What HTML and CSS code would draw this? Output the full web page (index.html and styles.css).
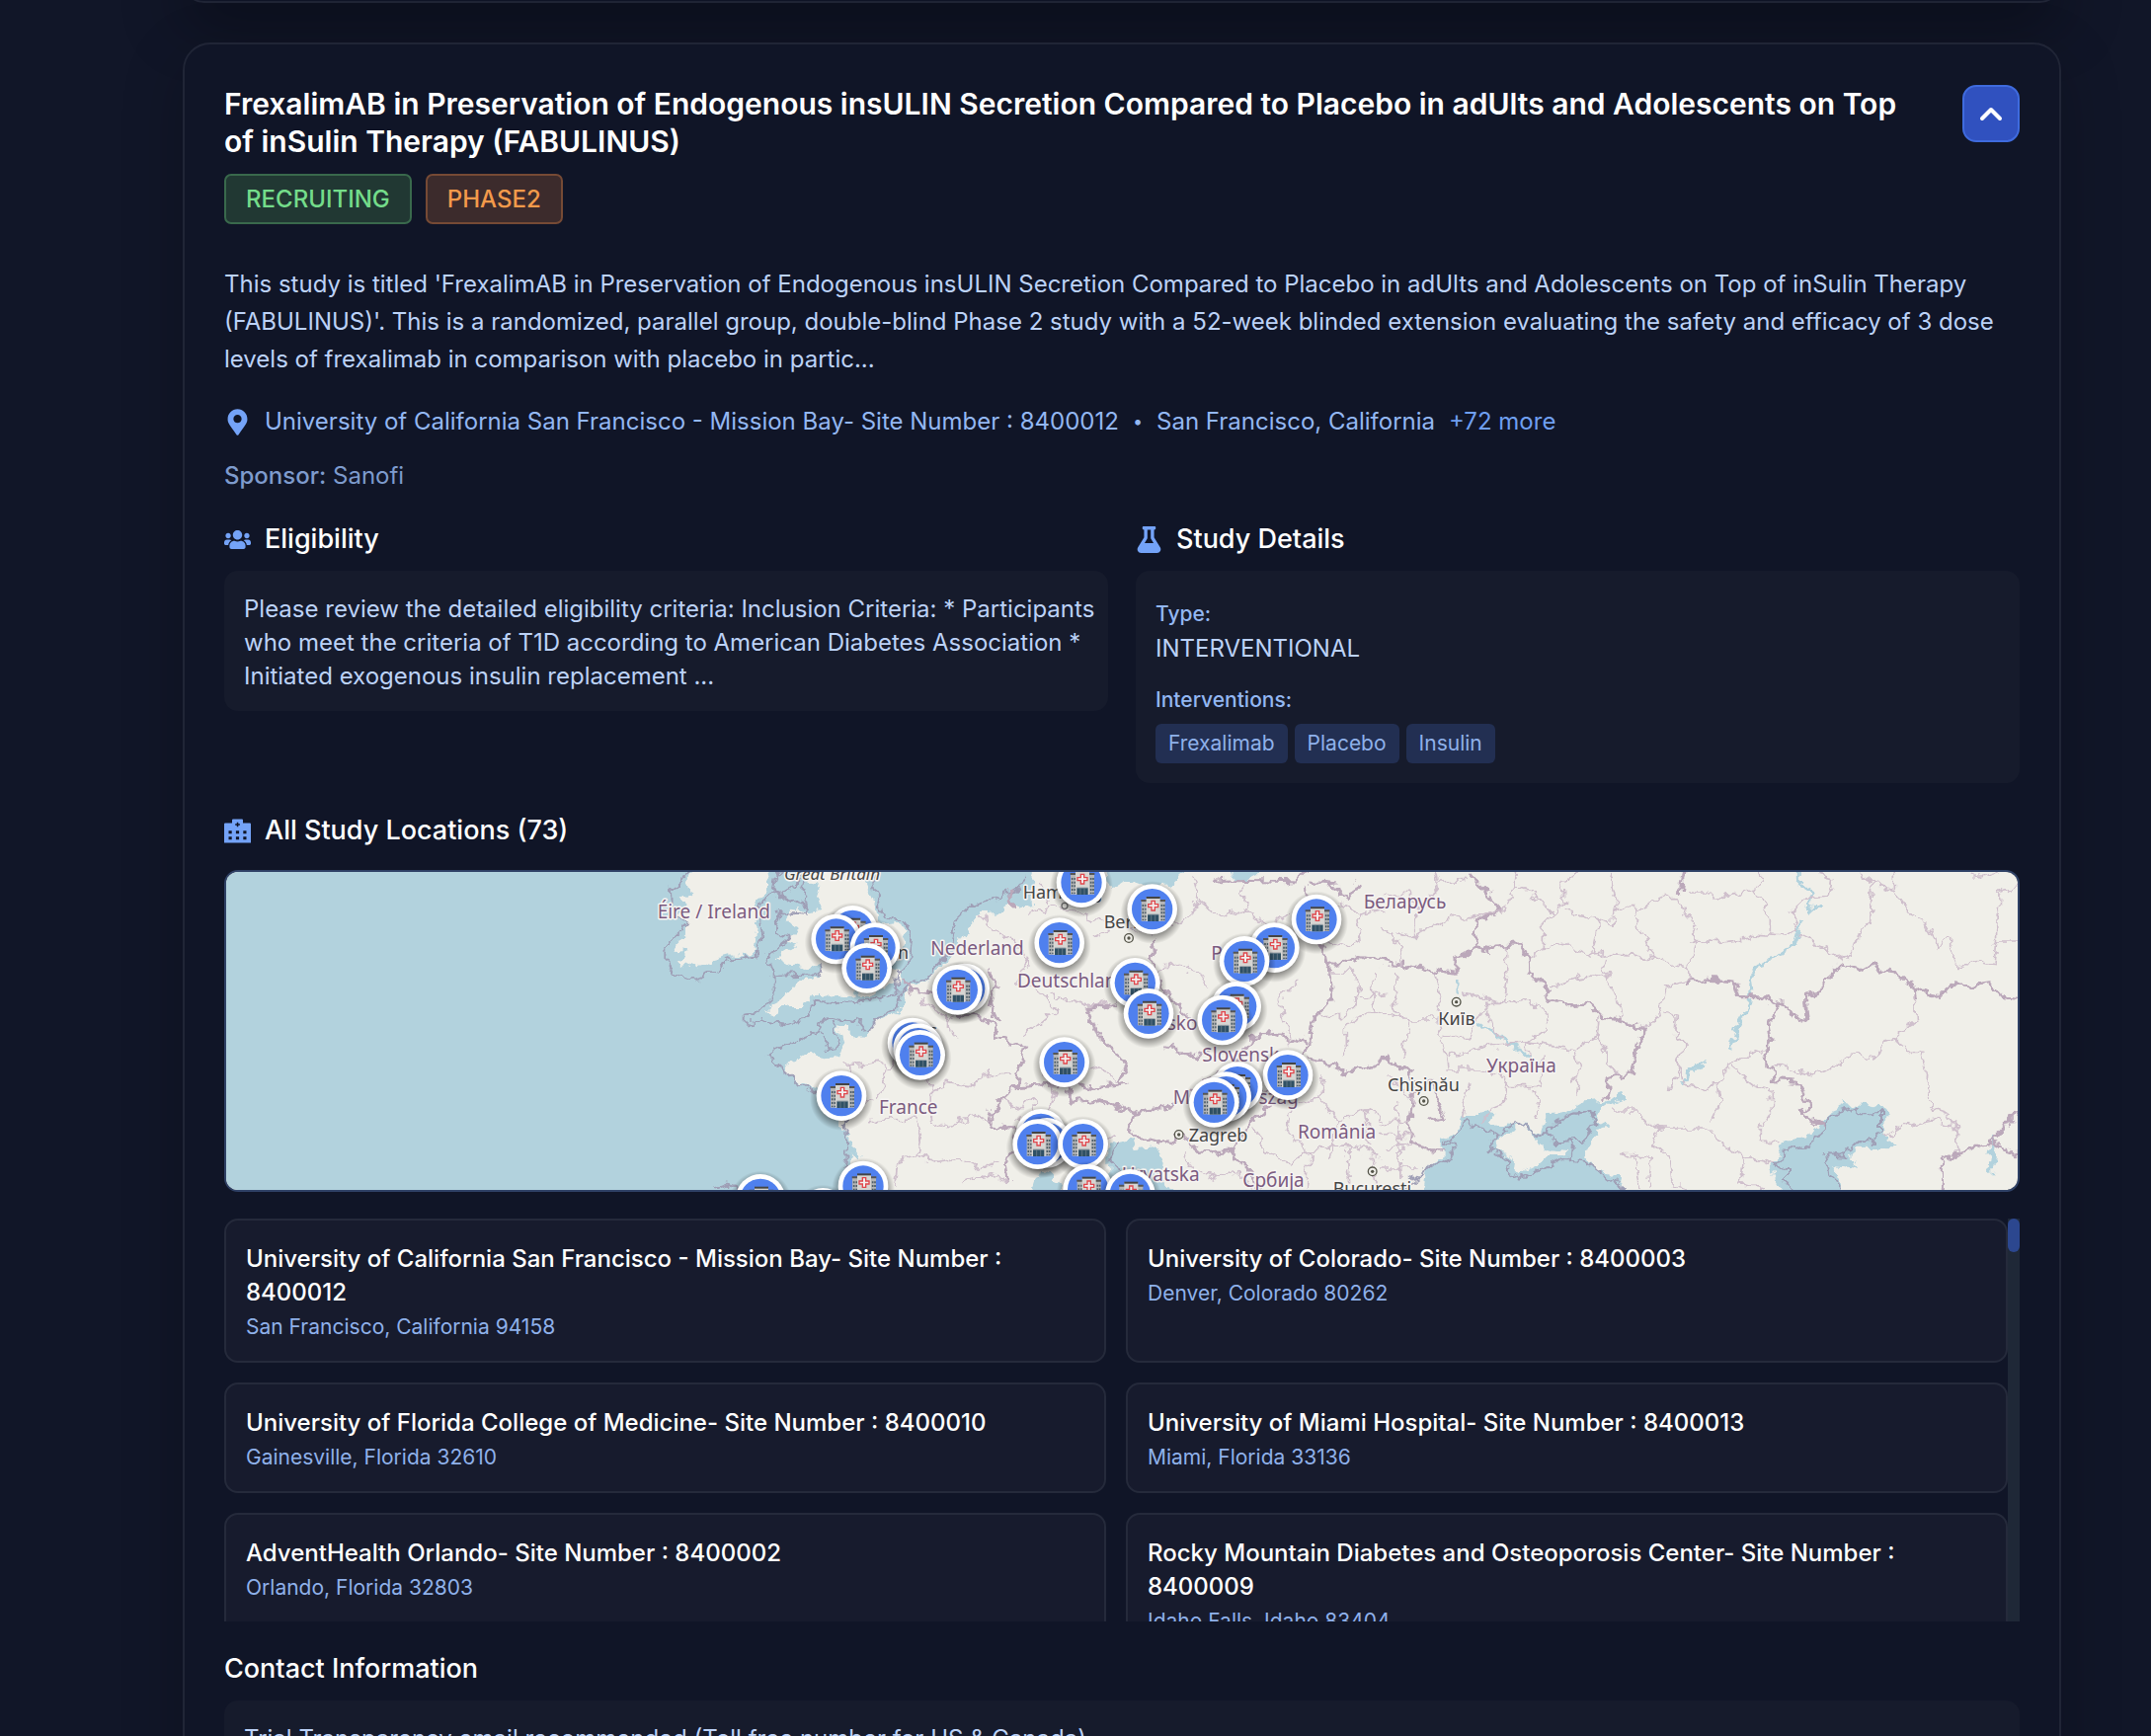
FILE: index.html
```html
<!DOCTYPE html>
<html lang="en">
<head>
<meta charset="utf-8">
<title>Clinical Trials</title>
<link rel="stylesheet" href="styles.css">
</head>
<body>
<main class="results">
  <article class="trial trial-previous"></article>

  <article class="trial">
    <header class="trial-header">
      <h2 class="trial-title">FrexalimAB in Preservation of Endogenous insULIN Secretion Compared to Placebo in adUlts and Adolescents on Top of inSulin Therapy (FABULINUS)</h2>
      <button class="toggle" type="button" aria-label="Collapse study" aria-expanded="true">
        <svg width="24" height="16" viewBox="0 0 24 16" aria-hidden="true"><path d="M3 13l9-9 9 9" fill="none" stroke="#fff" stroke-width="4" stroke-linecap="round" stroke-linejoin="round"/></svg>
      </button>
    </header>
    <div class="badges">
      <span class="badge badge-status">RECRUITING</span>
      <span class="badge badge-phase">PHASE2</span>
    </div>

    <p class="description">This study is titled 'FrexalimAB in Preservation of Endogenous insULIN Secretion Compared to Placebo in adUlts and Adolescents on Top of inSulin Therapy (FABULINUS)'. This is a randomized, parallel group, double-blind Phase 2 study with a 52-week blinded extension evaluating the safety and efficacy of 3 dose levels of frexalimab in comparison with placebo in partic...</p>

    <div class="place">
      <svg class="icon" viewBox="-69 0 522 512" aria-hidden="true"><path d="M172.268 501.67C26.97 291.031 0 269.413 0 192 0 85.961 85.961 0 192 0s192 85.961 192 192c0 77.413-26.97 99.031-172.268 309.67-9.535 13.774-29.93 13.773-39.464 0zM192 272c44.183 0 80-35.817 80-80s-35.817-80-80-80-80 35.817-80 80 35.817 80 80 80z"/></svg>
      <span class="place-site">University of California San Francisco - Mission Bay- Site Number : 8400012</span>
      <span class="place-dot">•</span>
      <span>San Francisco, California</span>
      <span class="place-more">+72 more</span>
    </div>
    <p class="sponsor"><strong>Sponsor:</strong> Sanofi</p>

    <div class="columns">
      <section>
        <h3 class="heading">
          <svg class="icon" viewBox="0 0 640 512" aria-hidden="true"><path d="M96 224c35.3 0 64-28.7 64-64s-28.7-64-64-64-64 28.7-64 64 28.7 64 64 64zm448 0c35.3 0 64-28.7 64-64s-28.7-64-64-64-64 28.7-64 64 28.7 64 64 64zm32 32h-64c-17.6 0-33.5 7.1-45.1 18.6 40.3 22.1 68.9 62 75.1 109.4h66c17.7 0 32-14.3 32-32v-32c0-35.3-28.7-64-64-64zm-256 0c61.9 0 112-50.1 112-112S381.9 32 320 32 208 82.1 208 144s50.1 112 112 112zm76.8 32h-8.3c-20.8 10-43.9 16-68.5 16s-47.6-6-68.5-16h-8.3C179.6 288 128 339.6 128 403.2V432c0 26.5 21.5 48 48 48h288c26.5 0 48-21.5 48-48v-28.8c0-63.6-51.6-115.2-115.2-115.2zm-223.7-13.4C161.5 263.1 145.6 256 128 256H64c-35.3 0-64 28.7-64 64v32c0 17.7 14.3 32 32 32h65.9c6.3-47.4 34.9-87.3 75.2-109.4z"/></svg>
          Eligibility
        </h3>
        <div class="panel">
          <p class="panel-text">Please review the detailed eligibility criteria: Inclusion Criteria: * Participants who meet the criteria of T1D according to American Diabetes Association * Initiated exogenous insulin replacement ...</p>
        </div>
      </section>
      <section>
        <h3 class="heading">
          <svg class="icon" viewBox="-32 0 512 512" aria-hidden="true"><path d="M437.2 403.5L320 215V64h8c13.300 0 24-10.700 24-24V24c0-13.300-10.700-24-24-24H120c-13.300 0-24 10.700-24 24v16c0 13.300 10.700 24 24 24h8v151L10.800 403.500C-18.500 450.600 15.300 512 70.900 512h306.200c55.700 0 89.400-61.500 60.100-108.500zM137.900 320l48.200-77.600c3.700-5.200 5.800-11.600 5.800-18.400V64h64v160c0 6.900 2.200 13.200 5.800 18.400l48.200 77.600h-172z"/></svg>
          Study Details
        </h3>
        <dl class="panel details">
          <dt>Type:</dt>
          <dd class="panel-text">INTERVENTIONAL</dd>
          <dt>Interventions:</dt>
          <dd class="chips"><span class="chip">Frexalimab</span><span class="chip">Placebo</span><span class="chip">Insulin</span></dd>
        </dl>
      </section>
    </div>

    <section class="locations">
      <h3 class="heading">
        <svg class="icon" viewBox="0 0 27 27" aria-hidden="true"><path fill-rule="evenodd" d="M0 6.500a1 1 0 0 1 1-1h7v-3a1 1 0 0 1 1-1h9a1 1 0 0 1 1 1v3h7a1 1 0 0 1 1 1v19H0zM12.800 4.800v1.500h-1.600v1.500h1.600v1.500h1.500V7.800h1.600V6.300h-1.600V4.800zM4.500 13.200v3h3.200v-3zm7.400 0v3h3.200v-3zm7.400 0v3h3.200v-3zM4.500 19.200v3h3.200v-3zm7.400 0v3h3.200v-3zm7.400 0v3h3.200v-3z"/></svg>
        All Study Locations (73)
      </h3>

      <div class="map">
        <svg class="map-canvas" viewBox="0 0 5442 966" preserveAspectRatio="xMidYMid slice" role="img" aria-label="Map of study locations in Europe">
          <defs>
            <filter id="rough" x="0" y="0" width="5442" height="966" filterUnits="userSpaceOnUse">
              <feTurbulence type="fractalNoise" baseFrequency=".028" numOctaves="3" seed="4" result="n"/>
              <feDisplacementMap in="SourceGraphic" in2="n" scale="44" xChannelSelector="R" yChannelSelector="G"/>
            </filter>
            <radialGradient id="shade"><stop offset=".7" stop-opacity=".4"/><stop offset="1" stop-opacity="0"/></radialGradient>
            <g id="capital"><circle r="13" fill="#f0efe9" stroke="#55554a" stroke-width="4"/><circle r="5" fill="#55554a"/></g>
            <g id="pin">
              <circle cy="10" r="96" fill="url(#shade)"/>
              <circle r="76" fill="#fff"/>
              <circle r="62" fill="#4f80ee"/>
              <path d="M-33-26h72v62h-72z" fill="#b4b5b5"/>
              <path d="M-34-29h18v6h-18zM22-29h18v6H22z" fill="#555"/>
              <path d="M-28-14v48M-20-14v48M29-14v48M36-14v48" stroke="#4d5d68" stroke-width="5" stroke-dasharray="6 5" fill="none"/>
              <path d="M-18-36h42v73h-42z" fill="#d6d5d2"/>
              <path d="M-18-38h42v6h-42z" fill="#444"/>
              <path d="M-2-25H8v10h10v9H8V4H-2V-6h-10v-9h10z" fill="#f2eeee" stroke="#e0474c" stroke-width="4"/>
              <path d="M-14 17h34v20h-34z" fill="#2f5064"/>
              <path d="M-14 16h34M-3 17v20M9 17v20" stroke="#7a8a94" stroke-width="2"/>
            </g>
          </defs>
          <rect width="5442" height="966" fill="#f0efe9"/>

          <g filter="url(#rough)">
            <g fill="#b2d2dd">
              <path d="M-40-40H2463L2450 40 2455 110 2410 95 2350 120 2280 130 2230 200 2190 270 2150 310 2110 340 2058 362 2055 415 2020 440 1970 455 1950 500 1900 498 1888 468 1858 468 1880 530 1870 565 1810 568 1773 545 1740 565 1700 580 1695 605 1740 640 1800 665 1850 700 1875 770 1905 830 1930 870 1900 860 1895 1000H-40z"/>
              <path d="M2660-30L2690 55 2735 25 2800 50 2870 35 2940-30zM3045-20L3075 30 3150-10V-30zM2680 830L2755 812 2765 840 2825 835 2840 885 2835 925 2900 1000H2680zM2440 1000L2465 925 2515 920 2560 1000z"/>
              <path d="M3630 1000L3648 895 3695 860 3695 810 3730 790 3755 735 3800 735 3850 742 3840 765 3915 772 3940 770 3995 795 4015 732 4075 730 4125 700 4195 695 4245 675V692L4175 715 4155 750 4205 772 4165 780 4155 820 4115 840 4155 900 4215 920 4270 1000z"/>
              <path d="M4740 1000L4690 900 4715 870 4730 820 4805 800 4865 750 4875 725 4925 705 5005 715 5025 705 5045 730 5035 810 5075 838 4955 836 4925 860 4955 902 4885 895 4895 930 4935 1000z"/>
              <path d="M5400 785L5380 805 5370 910 5350 912 5355 850 5375 795zM4500 560L4420 650 4410 640 4460 590z"/>
            </g>
            <g fill="#f0efe9">
              <path d="M1433-30L1398 36 1408 71 1388 81 1408 111 1383 126 1398 161 1398 186 1363 236 1403 241 1373 271 1413 291 1473 271 1543 251 1603 246 1613 161 1603 101 1623 71 1653 21 1640-30z"/>
              <path d="M1753-30L1773 31 1798 41 1788 81 1813 111 1773 121 1713 116 1703 151 1743 171 1703 211 1733 221 1673 261 1713 281 1763 291 1808 281 1798 316 1733 336 1703 381 1663 401 1638 426 1663 431 1703 411 1753 411 1783 376 1873 371 1953 376 2043 336 2053 306 2003 291 2043 261 2068 181 2043 156 1983 161 1973 101 1958 71 1913-30z"/>
              <path d="M3858 812L3933 770 3985 811 4015 841 4075 846 4065 861 4015 861 3985 891 3925 921 3905 901 3910 866 3855 846z"/>
            </g>
            <g fill="none" stroke="#b2d2dd" stroke-width="9">
              <path d="M4780-10V36L4818 60 4808 110 4850 116M4785 150L4765 220 4705 262 4655 276 4630 320 4635 370 4625 410 4590 470 4565 540M3735 330V380M3805 465L3870 505 3960 560" />
              <path d="M2230 110L2250 180 2200 200" stroke-width="22"/>
            </g>

            <g fill="none" stroke="#9f9fb6" stroke-width="6">
              <path d="M1410 5L1350 50 1352 110 1400 160 1333 220 1333 270 1365 315 1420 328 1480 305 1540 262 1615 250 1630 200 1620 100 1660 60 1720 90 1765 105 1770 60 1740 10"/>
              <path d="M1680-10L1665 60 1700 75 1740 20M1770 100L1760 130 1680 120 1665 190 1710 205 1640 260 1655 300V400L1610 425 1580 430 1580 455 1600 465 1630 450 1700 462 1760 450 1785 395 1850 400 1970 385 2035 370 2040 310 2080 255 2090 190 2060 150 2000 135 1980 90 1960 10"/>
              <path d="M1660 315L1800 310 1810 280M1890 750L1860 690 1800 680 1740 645 1690 600 1650 560 1660 540 1730 515 1790 490 1800 450 1850 442 1920 450 1940 478 1960 475 1980 445 2035 420 2045 360 2130 320 2200 240 2215 150 2260 105 2340 80 2400 60 2430 10M1890 750L1885 870 1870 960M1480 965L1520 950 1560 960"/>
              <path d="M1800 480L1830 540 1860 530 1850 450M2710 820L2690 880 2740 950M3520 1000L3650 895 3735 855 3730 830 3705 825 3770 750 3790 775 3865 795 3920 765 3990 800 4010 790 4030 820 4120 815 4160 760 4145 725 4090 735 4030 765 4000 800M3865 795L3830 840 3895 870 3890 910 3930 932 3990 905 4080 870 4130 880 4200 930 4250 965M4090 815L4085 870"/>
              <path d="M4705 897L4740 850 4800 830 4865 775 4875 740 4945 715 4960 730 5028 730 5028 790 5010 820 4950 820 4910 860 4860 855 4870 920 4920 970M4705 897L4740 900 4740 935 4765 970"/>
            </g>

            <g fill="none" stroke="#bba8ba" stroke-width="9" stroke-linejoin="round">
              <path d="M2050 320L2080 360 2150 370 2230 440 2290 440 2330 460 2340 500 2430 530 2410 600 2400 650M2310 290L2340 350 2320 400 2340 450M2400 650L2480 645 2540 640 2590 645 2640 655 2740 640M2400 650L2330 720 2320 770 2400 780 2390 840 2370 880 2380 940M2550 645L2570 700 2640 690 2700 710 2760 730"/>
              <path d="M1890 970L2000 975 2040 1000M2380 60L2390 110M2815 200L2820 280 2850 360 2910 430 2950 460M2700 400L2620 420 2650 500 2720 560 2740 600 2700 640M2850 530L2960 560 2990 540M2760 730L2880 710 2950 650 3030 610 3090 560M2760 730L2740 800 2860 820 2900 800M3090 560L3110 500 3190 490 3280 520M3000 30L3100 25 3250 30 3290-10M3290 30L3380 40 3400 90 3440 30M3280 40L3290 180 3340 250 3350 300 3360 380 3300 450 3290 520"/>
              <path d="M3340 280L3440 260 3530 280 3610 290 3670 300 3735 310 3735 260 3800 235 3840 245 3850 225 3930 222 3950 260 3955 310 4000 330 4020 385 4080 410 4140 400 4180 440 4240 455 4300 475 4285 540 4270 610 4200 630 4190 690M3800 240L3795 150 3870 120 3860 100 3780 10M3290 520L3260 570 3180 620 3140 680 3060 740M3290 560L3400 610 3520 570 3600 610 3605 700 3590 820 3700 850M3560 580L3620 640 3660 640 3700 750 3650 760M2900 800L2960 850 3050 850 3110 910 3140 965M3050 850L3100 770 3180 700"/>
              <path d="M4430-10L4420 60M4440 340L4500 325 4580 330 4595 380 4670 380 4710 400 4730 395 4775 455 4800 440 4795 380 4830 370 4850 335 4910 280 4960 300 5005 275 5020 300 5075 305 5130 350 5200 385 5240 340 5300 345 5360 335 5390 380 5442 385M4710 400L4685 450 4695 510 4670 575 4700 590 4705 635 4770 640 4810 710 4780 730 4860 775M5215 1000V868L5370 818 5442 868M5370 818L5442 725M5130 350L5135 385"/>
            </g>

            <g fill="none" stroke="#cfbfcc" stroke-width="5">
              <path d="M1880 568L1900 590 1990 580 2010 620 1970 690M1900 590L1910 690 1960 700M2010 600L2040 520 2100 560M2130 620L2140 660 2190 640 2260 650 2310 610 2380 620M2140 660V750L2190 770 2280 740 2320 760M1950 755L2090 750 2110 800 2100 860 2160 880 2230 870 2290 900 2350 880M2100 860L2040 880 2030 960M2110 390L2180 440 2200 480 2220 500M2190 470L2230 390 2290 380M2230 940L2320 920 2380 940M2440 260L2400 330 2480 370 2520 420 2460 470 2420 500M2500 370L2560 390 2640 410 2700 390M2440 140L2500 100 2600 130 2660 150M2290 130L2350 190 2400 210 2440 290M2500 100L2480 30"/>
              <path d="M2480 600L2520 660 2500 720 2440 740M2360 700L2400 720 2450 690 2460 740 2400 750M2640 200L2720 160 2810 190M2810 300L2900 280 2960 310 2990 350M2940 20L2960 90 2900 150 2810 180M2960 90L3020 140 3100 110 3160 160 3240 130M3100 110L3080 40M3200 380L3220 450 3230 520M3200 380L3260 330M3350 300L3430 300 3440 380 3520 370M3440 380L3400 440 3310 440M3490 300L3480 420 3400 470 3400 560M3480 420L3590 450 3570 560M3380 100L3440 130 3520 110M3440 130L3450 210 3380 230 3300 200"/>
              <path d="M2560 800L2620 850 2700 800M2700 640L2660 590 2620 600M2910 850L2930 900 3000 930 3050 900 3120 960M3200 640L3240 700 3320 690 3380 760 3460 720 3520 750M3240 700L3220 790 3290 850 3400 830 3500 860M3320 690L3330 610M3290 850L3280 960M3400 830L3410 950M3460 720L3470 830M3380 760L3350 870M3120 780L3160 850 3240 880 3290 850M3500 760H3600M3510 800H3610M3520 840L3600 830M3510 900H3620M3560 700L3570 930M3480 860L3490 965M3530 620L3620 700"/>
              <path d="M3670 0L3680 60 3620 110 3600 70 3520 70M3680 30L3770 25M3600 200L3700 140 3780 140M3560 190L3610 200 3615 110M3570 290L3560 210 3510 170M3780 140L3870 120 3915 50 3920-10M3915 50L3960 60 4030 125 4070 90 4060 30 4120-10M4030 125L4000 160 4000 230 3955 260M4000 230L4070 220 4150 255 4200 250M4070 120L4150 140 4215 155 4220 90 4200 0M4215 110L4280 110 4290 180 4330 240 4325 260M4280 120L4360 80 4410 80 4470 200 4440 290M4150 255L4170 150M4200 250L4330 260 4390 285 4440 290 4460 330 4370 350 4360 420 4320 470 4300 475"/>
              <path d="M3670 300L3690 400 3680 450 3700 540 3710 600M3550 300L3560 380 3550 400 3570 450 3680 450M3890 220V310L3880 400 3830 400 3830 450 3870 510M3760 370L3880 400 3950 390 4010 420 4020 470 3950 520 3960 600M3700 500L3780 500 3830 400M3710 560L3830 530 3960 520 4090 540 4110 610 4100 680M3700 600L3800 600 3890 630 3880 710 3830 720 3820 760M3890 650H3990L4000 560M3975 660L3990 750M4200 320L4180 270M4020 350L4110 320 4190 310 4230 400 4240 450M4170 440L4165 500 4200 580 4230 620M3760 740L3780 640M4110 610L4080 640M4170 500L4100 540"/>
              <path d="M4370 430L4405 440 4400 500 4440 530 4410 580 4420 640 4500 660 4530 640 4540 700 4510 760M4210 720L4290 720 4310 760 4360 780 4335 820 4380 860 4390 950 4440 965M4360 780L4440 780 4500 780 4560 840 4610 865 4705 890M4390 660L4410 580M4510 660L4570 590 4640 540 4670 550M4570 590L4640 650 4690 670 4690 740 4660 780 4660 820 4720 820M4610 865L4600 950 4680 960M4230 860L4280 860 4290 960M4280 860L4330 870 4320 960"/>
              <path d="M4440 60L4500 60 4530 90 4560 70 4640 60 4670 20 4660 0M4640 60L4690 130 4690 190M4440 210L4530 215 4610 205 4650 190 4740 195 4775 170 4750 120 4790 85 4870 75 4880 20 4840 10M4775 190L4860 230 4910 270 4950 240 4960 190 4990 150 5005 30 4960 0M5005 30L5070 60M5065-10V60L5110 120 5160 145 5180 185 5200 220 5240 195 5240 240 5260 290 5320 270 5370 275 5375 210 5442 210M5380 210L5385 60 5440 40M5310 0L5330 20 5390 5M5130 370L5135 450 5080 480 5080 510 5030 520 5015 570 4960 550 4920 560 4870 600 4830 615 4700 590M5080 510L5105 550 5150 550 5165 620 5160 680 5190 725 5235 740 5250 770 5260 850M5035 810L5100 770 5190 750 5245 770"/>
            </g>
          </g>

          <g class="map-country">
            <text x="1310" y="140">Éire / Ireland</text>
            <text x="2140" y="251">Nederland</text>
            <text x="2403" y="350">Deutschland</text>
            <text x="1983" y="735">France</text>
            <text x="2992" y="268">Polska</text>
            <text x="2790" y="481">Česko</text>
            <text x="2965" y="577">Slovensko</text>
            <text x="2876" y="705">Magyarország</text>
            <text x="3255" y="810">România</text>
            <text x="2720" y="939">Hrvatska</text>
            <text x="3088" y="956">Србија</text>
            <text x="3455" y="111">Беларусь</text>
            <text x="3828" y="610">Україна</text>
          </g>
          <g class="map-city">
            <text x="1695" y="25" class="map-region">Great Britain</text>
            <text x="2420" y="82">Hamburg</text>
            <text x="2666" y="172">Berlin</text>
            <text x="1880" y="264">London</text>
            <text x="2035" y="500">Paris</text>
            <text x="2924" y="820">Zagreb</text>
            <text x="3362" y="982">București</text>
            <text x="3682" y="464">Київ</text>
            <text x="3528" y="666">Chișinău</text>
          </g>
          <use href="#capital" x="2742" y="201"/>
          <use href="#capital" x="2894" y="798"/>
          <use href="#capital" x="3482" y="910"/>
          <use href="#capital" x="3737" y="395"/>
          <use href="#capital" x="3638" y="696"/>
          <circle cx="2547" cy="103" r="9" fill="#f0efe9" stroke="#777" stroke-width="4"/>

          <g>
            <use href="#pin" x="2598" y="32"/>
            <use href="#pin" x="2813" y="113"/>
            <use href="#pin" x="3312" y="144"/>
            <use href="#pin" x="1903" y="178"/>
            <use href="#pin" x="1853" y="204"/>
            <use href="#pin" x="2531" y="215"/>
            <use href="#pin" x="1971" y="230"/>
            <use href="#pin" x="3184" y="230"/>
            <use href="#pin" x="3093" y="271"/>
            <use href="#pin" x="1946" y="292"/>
            <use href="#pin" x="2761" y="337"/>
            <use href="#pin" x="2243" y="354"/>
            <use href="#pin" x="2221" y="358"/>
            <use href="#pin" x="3068" y="409"/>
            <use href="#pin" x="2802" y="430"/>
            <use href="#pin" x="3026" y="450"/>
            <use href="#pin" x="2085" y="519"/>
            <use href="#pin" x="2102" y="536"/>
            <use href="#pin" x="2108" y="556"/>
            <use href="#pin" x="2546" y="578"/>
            <use href="#pin" x="3225" y="617"/>
            <use href="#pin" x="3072" y="653"/>
            <use href="#pin" x="1869" y="680"/>
            <use href="#pin" x="3038" y="683"/>
            <use href="#pin" x="3001" y="700"/>
            <use href="#pin" x="2475" y="796"/>
            <use href="#pin" x="2493" y="823"/>
            <use href="#pin" x="2465" y="827"/>
            <use href="#pin" x="2603" y="827"/>
            <use href="#pin" x="1935" y="954"/>
            <use href="#pin" x="2618" y="964"/>
            <use href="#pin" x="2746" y="979"/>
            <use href="#pin" x="1623" y="994"/>
            <use href="#pin" x="1813" y="1036"/>
          </g>
        </svg>
      </div>

      <div class="site-scroller">
        <ul class="sites">
          <li class="site"><p class="site-name">University of California San Francisco - Mission Bay- Site Number : 8400012</p><p class="site-city">San Francisco, California 94158</p></li>
          <li class="site"><p class="site-name">University of Colorado- Site Number : 8400003</p><p class="site-city">Denver, Colorado 80262</p></li>
          <li class="site"><p class="site-name">University of Florida College of Medicine- Site Number : 8400010</p><p class="site-city">Gainesville, Florida 32610</p></li>
          <li class="site"><p class="site-name">University of Miami Hospital- Site Number : 8400013</p><p class="site-city">Miami, Florida 33136</p></li>
          <li class="site"><p class="site-name">AdventHealth Orlando- Site Number : 8400002</p><p class="site-city">Orlando, Florida 32803</p></li>
          <li class="site"><p class="site-name">Rocky Mountain Diabetes and Osteoporosis Center- Site Number : 8400009</p><p class="site-city">Idaho Falls, Idaho 83404</p></li>
        </ul>
        <div class="scroll-track"><div class="scroll-thumb"></div></div>
      </div>
    </section>

    <section class="contact">
      <h3 class="heading">Contact Information</h3>
      <div class="panel">
        <p class="panel-text">Trial Transparency email recommended (Toll free number for US &amp; Canada)</p>
      </div>
    </section>
  </article>
</main>
</body>
</html>
```
FILE: styles.css
```css
* {
  box-sizing: border-box;
}

body,
h2,
h3,
p,
ul,
dl,
dd {
  margin: 0;
  padding: 0;
}

body {
  height: 100vh;
  overflow: hidden;
  background: #111628;
  color: #bcd2f7;
  font: 24px/34px Inter, "Liberation Sans", sans-serif;
}

.results {
  display: flex;
  flex-direction: column;
  gap: 40px;
  padding: 0 91px 0 185px;
}

.trial {
  padding: 41px 40px;
  border: 2px solid #202536;
  border-radius: 28px;
  background: #101527;
  box-shadow: 0 16px 64px rgba(0, 0, 0, .2);
}

.trial-previous {
  height: 43px;
  margin-top: -40px;
  padding: 0;
  box-shadow: 0 16px 64px rgba(0, 0, 0, .45);
}

.trial-header {
  display: flex;
  align-items: flex-start;
  justify-content: space-between;
  gap: 40px;
}

.trial-title {
  color: #fff;
  font-size: 30px;
  font-weight: 600;
  line-height: 38px;
}

.toggle {
  display: flex;
  flex: none;
  align-items: center;
  justify-content: center;
  width: 58px;
  height: 58px;
  border: 2px solid #3f6bde;
  border-radius: 14px;
  background: #3051bf;
}

.badges {
  display: flex;
  gap: 14px;
  margin-top: 14px;
}

.badge {
  padding: 7px 20px;
  border: 2px solid;
  border-radius: 7px;
  line-height: 33px;
  font-weight: 500;
}

.badge-status {
  border-color: #39694c;
  background: #213833;
  color: #74dc8a;
}

.badge-phase {
  border-color: #764a35;
  background: #3c2b2c;
  color: #f39a4b;
}

.description {
  margin-top: 42px;
  line-height: 38px;
}

.icon {
  flex: none;
  width: 27px;
  height: 27px;
  fill: #74a3f8;
}

.place {
  display: flex;
  align-items: center;
  gap: 14px;
  margin-top: 25px;
  color: #93b7f2;
  line-height: 38px;
}

.place-dot {
  font-size: 18px;
}

.place-more {
  color: #6f9ff0;
}

.sponsor {
  margin-top: 19px;
  color: #7e9bcd;
}

.sponsor strong {
  font-weight: 500;
}

.columns {
  display: grid;
  grid-template-columns: 1fr 1fr;
  gap: 28px;
  align-items: start;
  margin-top: 28px;
}

.heading {
  display: flex;
  align-items: center;
  gap: 14px;
  color: #fff;
  font-size: 27px;
  font-weight: 500;
  line-height: 38px;
}

.panel {
  margin-top: 13px;
  padding: 22px 10px 18px 20px;
  border-radius: 14px;
  background: #161b2c;
}

.details {
  padding: 30px 20px 20px;
}

.details dt {
  color: #93b7f2;
  font-size: 21px;
  font-weight: 500;
  line-height: 28px;
}

.details .panel-text {
  margin: 4px 0 21px;
}

.chips {
  display: flex;
  gap: 7px;
  margin-top: 10px;
}

.chip {
  padding: 0 13px;
  border-radius: 6px;
  background: #222f52;
  color: #8fb1ea;
  font-size: 21px;
  line-height: 40px;
}

.locations,
.contact {
  margin-top: 29px;
}

.map {
  height: 326px;
  margin-top: 21px;
  overflow: hidden;
  border: 2px solid #2f4166;
  border-radius: 14px;
}

.map-canvas {
  display: block;
  width: 100%;
  height: 100%;
}

.map-country,
.map-city {
  font-family: "Noto Sans", sans-serif;
  paint-order: stroke;
  stroke: #f6f4f2;
  stroke-width: 9px;
  stroke-linejoin: round;
}

.map-country {
  fill: #7b5b80;
  font-size: 57px;
}

.map-city {
  fill: #444;
  font-size: 54px;
}

.map-region {
  font-size: 51px;
  font-style: italic;
}

.site-scroller {
  display: flex;
  height: 408px;
  margin-top: 27px;
  overflow: hidden;
}

.sites {
  display: grid;
  flex: 1;
  grid-template-columns: 1fr 1fr;
  gap: 20px;
  align-content: start;
  list-style: none;
}

.site {
  padding: 22px 20px 20px;
  border: 2px solid #252a3b;
  border-radius: 14px;
  background: #171b2d;
}

.site-name {
  color: #fff;
  font-weight: 500;
}

.site-city {
  margin-top: 4px;
  color: #8fb1ea;
  font-size: 21px;
  line-height: 28px;
}

.scroll-track {
  width: 12px;
  background: #1f2837;
}

.scroll-thumb {
  height: 34px;
  border-radius: 6px;
  background: #2c478f;
}
```
